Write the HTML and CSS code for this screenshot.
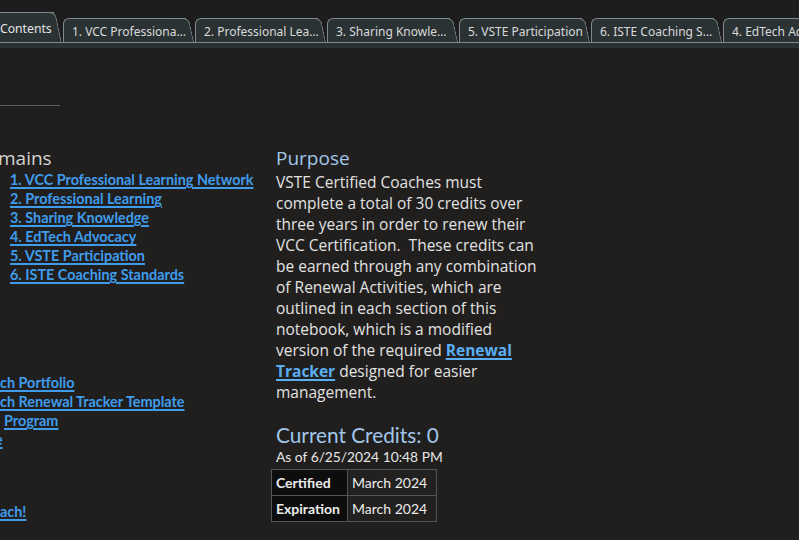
FILE: index.html
```html
<!DOCTYPE html>
<html>
<head>
<meta charset="utf-8">
<link rel="stylesheet" href="styles.css">
</head>
<body>
<div class="tabbar">
  <div class="tabs">
    <div class="tab active"><span class="label">Contents</span></div>
    <div class="tab"><span class="label">1. VCC Professional Learning Network</span></div>
    <div class="tab"><span class="label">2. Professional Learning</span></div>
    <div class="tab"><span class="label">3. Sharing Knowledge</span></div>
    <div class="tab"><span class="label">5. VSTE Participation</span></div>
    <div class="tab"><span class="label">6. ISTE Coaching Standards</span></div>
    <div class="tab"><span class="label">4. EdTech Advocacy</span></div>
  </div>
  <div class="strip"></div>
</div>
<div class="page">
  <div class="left">
    <div class="rule"></div>
    <h2 class="domains">mains</h2>
    <ul class="domain-links">
      <li><a href="#">1. VCC Professional Learning Network</a></li>
      <li><a href="#">2. Professional Learning</a></li>
      <li><a href="#">3. Sharing Knowledge</a></li>
      <li><a href="#">4. EdTech Advocacy</a></li>
      <li><a href="#">5. VSTE Participation</a></li>
      <li><a href="#">6. ISTE Coaching Standards</a></li>
    </ul>
    <ul class="res-links">
      <li><a href="#">ch Portfolio</a></li>
      <li><a href="#">ch Renewal Tracker Template</a></li>
      <li><a href="#" class="sp">Program</a></li>
      <li><a href="#" class="clip">e</a></li>
    </ul>
    <ul class="res-links last">
      <li><a href="#">ach!</a></li>
    </ul>
  </div>
  <div class="right">
    <h2 class="purpose">Purpose</h2>
    <p class="text">VSTE Certified Coaches must complete a total of 30 credits over three years in order to renew their VCC Certification.&nbsp; These credits can be earned through any combination of Renewal Activities, which are outlined in each section of this notebook, which is a modified version of the required <a href="#">Renewal Tracker</a> designed for easier management.</p>
    <h2 class="credits">Current Credits: 0</h2>
    <div class="asof">As of 6/25/2024 10:48 PM</div>
    <table class="dates">
      <tr><th>Certified</th><td>March 2024</td></tr>
      <tr><th>Expiration</th><td>March 2024</td></tr>
    </table>
  </div>
</div>
</body>
</html>
```
FILE: styles.css
```css
html, body {
  margin: 0;
  padding: 0;
  background: #201f1e;
  width: 799px;
  height: 540px;
  overflow: hidden;
}

.tabbar {
  background: #1d1d1d;
}

.tabs {
  display: flex;
  align-items: flex-end;
  height: 42px;
  border-bottom: 1px solid #7f8b8c;
  margin-left: -20px;
  white-space: nowrap;
  overflow: hidden;
}

.tab {
  position: relative;
  isolation: isolate;
  flex: 0 0 auto;
  width: 132px;
  height: 24px;
  box-sizing: border-box;
  display: flex;
  align-items: center;
  padding: 3px 7px 0 10px;
  font-family: "Noto Sans", "Open Sans", sans-serif;
  font-size: 12px;
  color: #d9dadb;
}

.tab .label {
  overflow: hidden;
  text-overflow: ellipsis;
  white-space: nowrap;
  display: block;
}

.tab::before {
  content: "";
  position: absolute;
  top: 0;
  bottom: 0;
  left: 1px;
  right: 8px;
  background: #2b3234;
  border: 1px solid #7f8b8c;
  border-right: none;
  border-bottom: none;
  border-radius: 6px 0 0 0;
  z-index: -1;
}

.tab::after {
  content: "";
  position: absolute;
  top: 0;
  bottom: 0;
  right: 0;
  width: 14px;
  background: #2b3234;
  border-top: 1px solid #7f8b8c;
  border-right: 1px solid #7f8b8c;
  border-radius: 0 6px 0 0;
  transform: skewX(12deg);
  transform-origin: bottom right;
  z-index: -1;
}

.tab.active {
  width: 82px;
  height: 31px;
  margin-bottom: -1px;
  z-index: 2;
  padding: 1px 4px 0 20px;
  font-size: 12.2px;
  color: #e4e4e4;
}

.tab.active .label {
  overflow: visible;
}

.strip {
  height: 5px;
  background: #2b3234;
}

.page {
  display: flex;
  font-family: "Lato", "Open Sans", sans-serif;
}

.left {
  width: 276px;
  flex: 0 0 276px;
  overflow: hidden;
}

.rule {
  width: 60px;
  height: 1px;
  background: #5c5c5c;
  margin-top: 57px;
}

h2 {
  margin: 0;
  font-weight: 300;
}

.domains {
  margin-top: 40px;
  font-family: "Open Sans", sans-serif;
  font-size: 19px;
  line-height: 24px;
  color: #d4d4d4;
  font-weight: 400;
  margin-left: -2px;
}

ul {
  list-style: none;
  margin: 0;
  padding: 0;
}

a {
  color: #3f9cec;
  font-weight: 700;
  text-decoration: underline;
  text-underline-offset: 2px;
  text-decoration-thickness: 1.5px;
}

.domain-links {
  padding-left: 10px;
}

.domain-links li,
.res-links li {
  font-size: 14.4px;
  line-height: 19px;
  height: 19px;
}

.res-links {
  margin-top: 89px;
}

.res-links .sp {
  margin-left: 4px;
}

.res-links .clip {
  margin-left: -5px;
}

.res-links.last {
  margin-top: 53px;
}

.right {
  padding-top: 98px;
  font-family: "Open Sans", sans-serif;
}

.purpose {
  font-size: 19px;
  line-height: 24px;
  color: #a0c6ea;
  font-weight: 400;
}

.text {
  margin: 2px 0 0;
  width: 264px;
  font-size: 15.5px;
  line-height: 21px;
  color: #e2e2e2;
}

.text a {
  color: #5aaef2;
  font-family: "Open Sans", sans-serif;
}

.credits {
  margin-top: 20px;
  font-family: "Lato", sans-serif;
  font-weight: 400;
  font-size: 20.8px;
  line-height: 24px;
  color: #a0c6ea;
}

.asof {
  font-family: "Lato", sans-serif;
  font-size: 13.8px;
  line-height: 19px;
  color: #e6e6e6;
}

.dates {
  border-collapse: collapse;
  margin-left: -5px;
  margin-top: 3px;
  font-family: "Lato", sans-serif;
  font-size: 14px;
  color: #ececec;
}

.dates th,
.dates td {
  border: 1px solid #545454;
  height: 25px;
  padding: 0 4px;
  text-align: left;
}

.dates th {
  background: #0d0d0d;
  font-weight: 700;
  width: 67px;
}

.dates td {
  background: #222120;
  font-weight: 400;
  width: 80px;
}
```
